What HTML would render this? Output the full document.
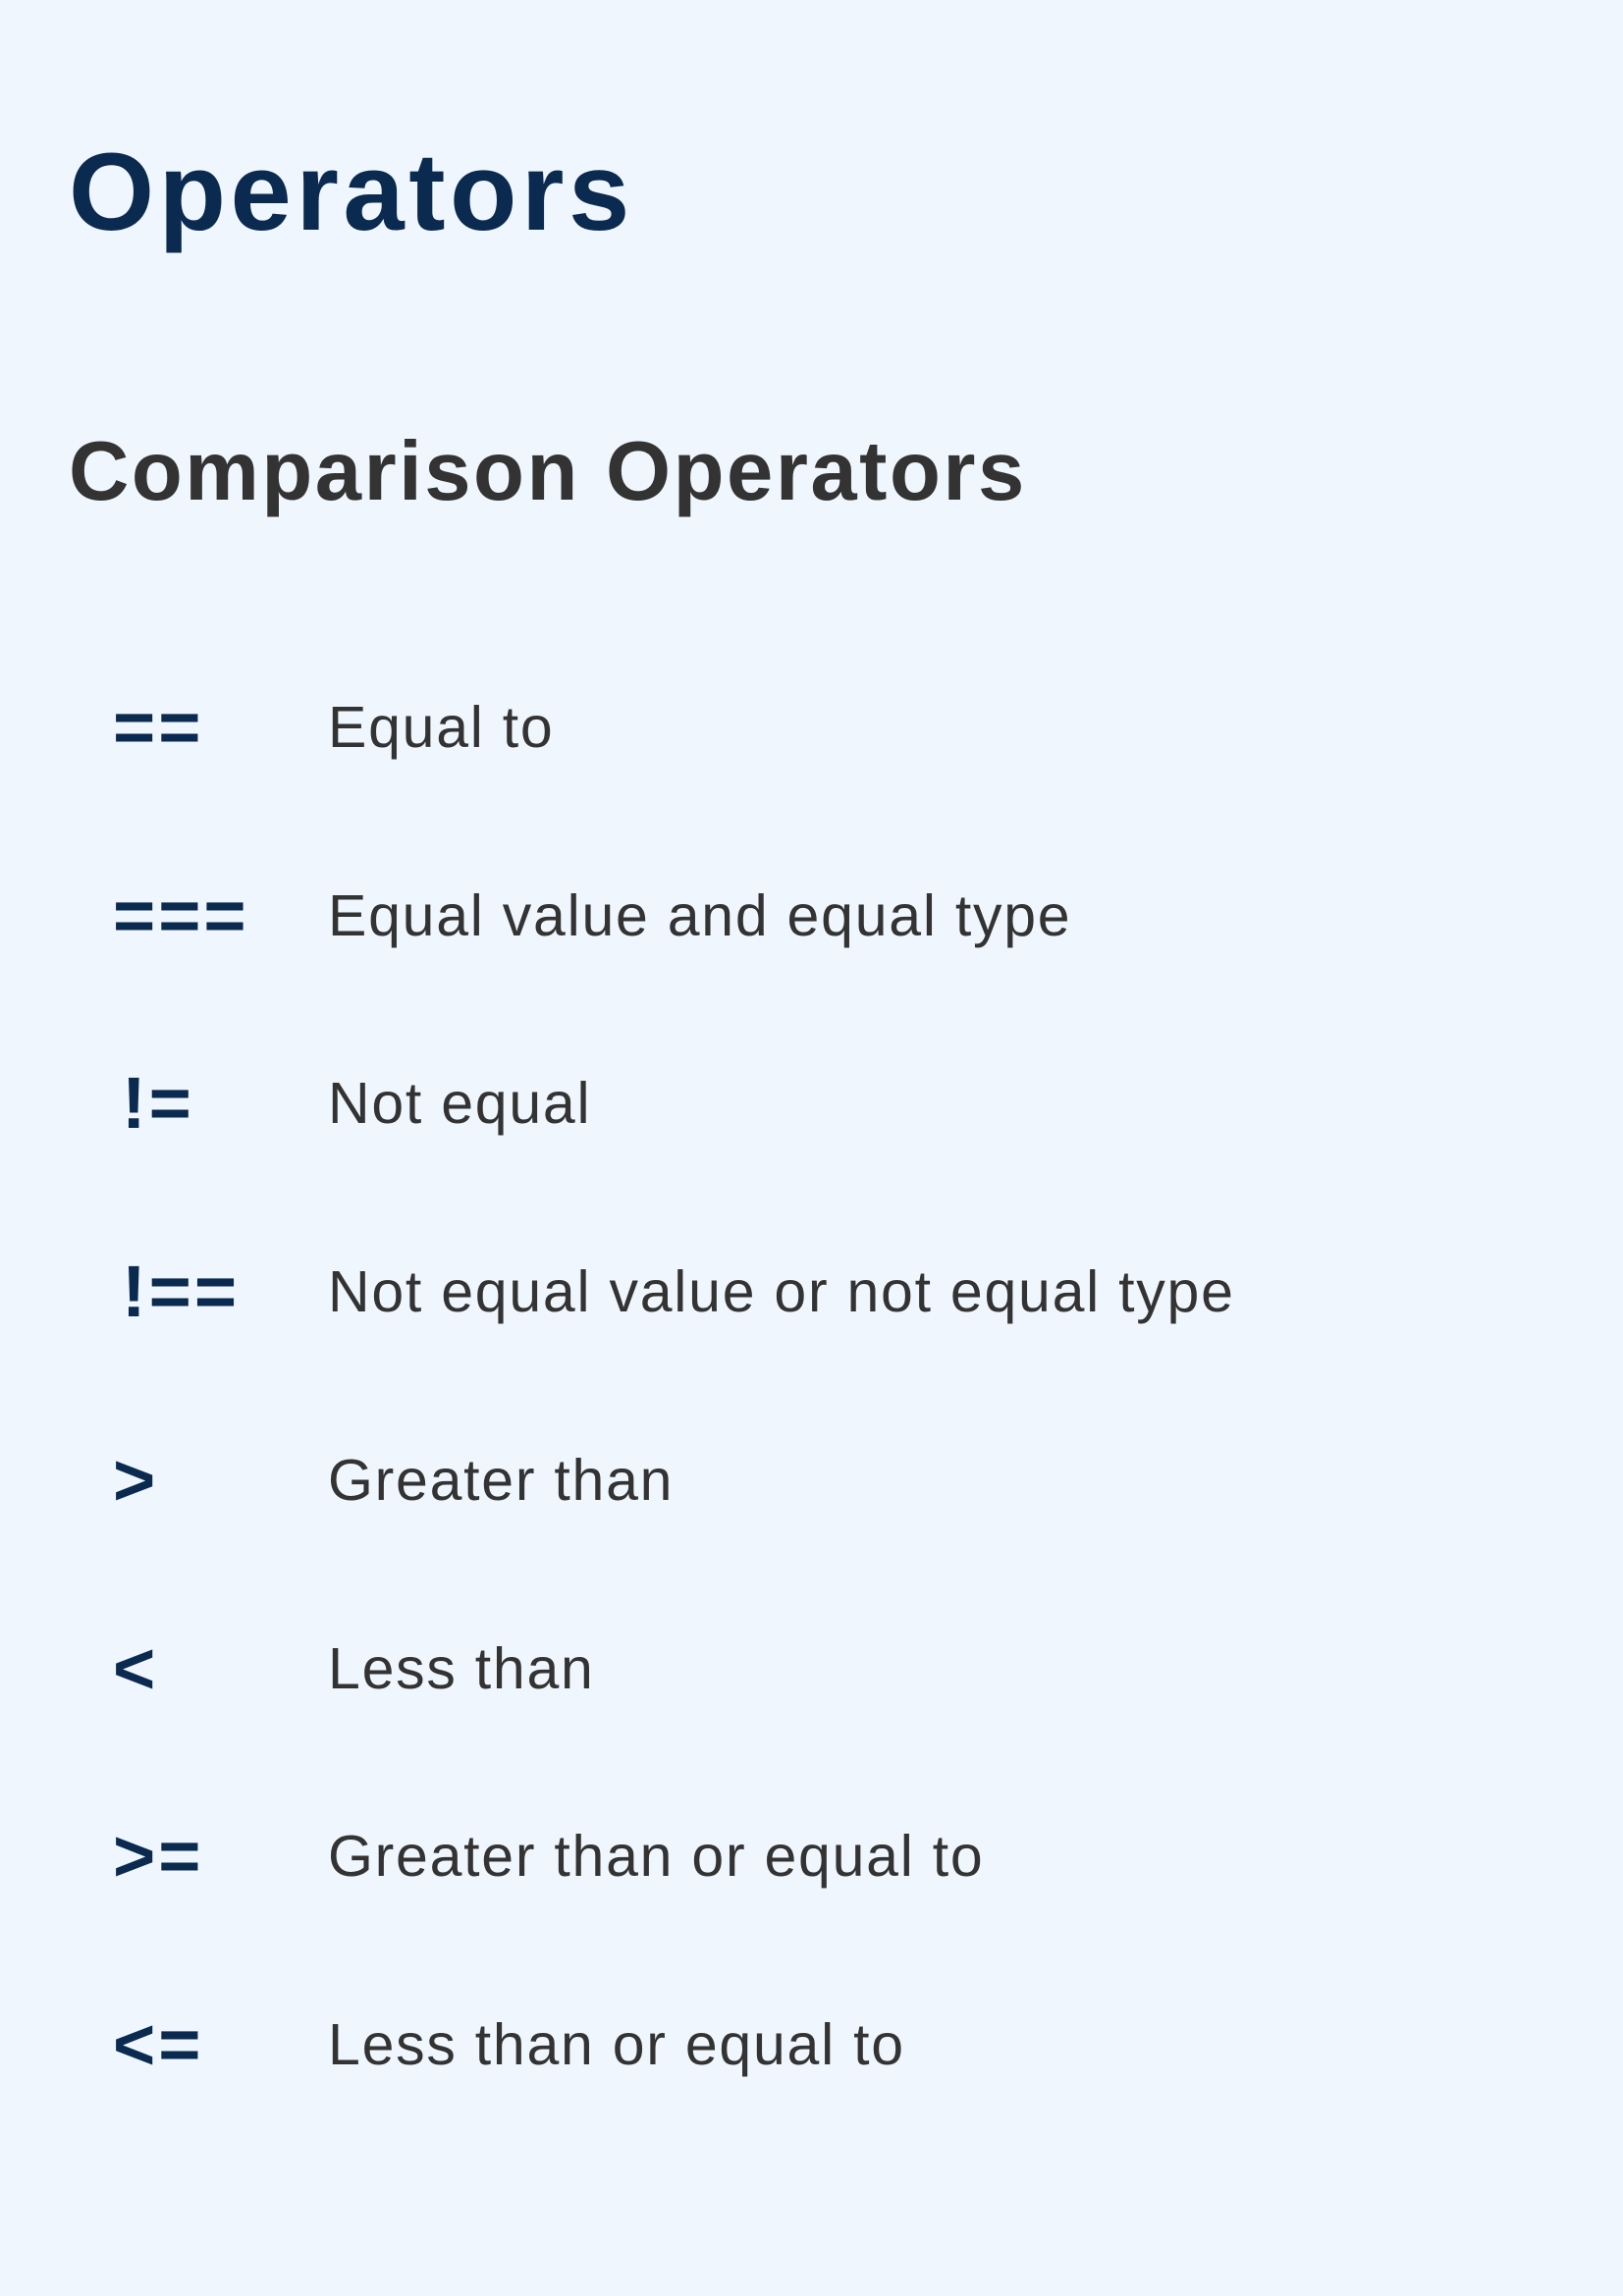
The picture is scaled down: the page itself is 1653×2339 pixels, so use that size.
<!DOCTYPE html>
<html><head><meta charset="utf-8"><style>
html,body{margin:0;padding:0}
body{width:1653px;height:2339px;background:#eff6fd;position:relative;overflow:hidden;font-family:"Liberation Sans",sans-serif}
.t{position:absolute;left:70px;top:140px;font-size:112px;font-weight:bold;color:#0b2a4f;letter-spacing:4.5px;line-height:1;white-space:nowrap}
.s{position:absolute;left:70px;top:438px;font-size:85px;font-weight:bold;color:#333;letter-spacing:2.5px;line-height:1;white-space:nowrap}
.row{position:absolute;left:0;height:80px;width:1653px}
.op{position:absolute;left:115px;bottom:-7px;font-size:74px;font-weight:bold;color:#0b2a4f;letter-spacing:3px;line-height:1;white-space:nowrap}
.op.b{left:124px}
.d{position:absolute;left:334px;bottom:0;font-size:59px;color:#333;letter-spacing:1.75px;line-height:1;white-space:nowrap}
</style></head><body>
<div class="t">Operators</div>
<div class="s">Comparison Operators</div>
<div class="row" style="top:691px"><span class="op">==</span><span class="d">Equal to</span></div>
<div class="row" style="top:883px"><span class="op">===</span><span class="d">Equal value and equal type</span></div>
<div class="row" style="top:1074px"><span class="op b">!=</span><span class="d">Not equal</span></div>
<div class="row" style="top:1266px"><span class="op b">!==</span><span class="d">Not equal value or not equal type</span></div>
<div class="row" style="top:1458px"><span class="op">&gt;</span><span class="d">Greater than</span></div>
<div class="row" style="top:1650px"><span class="op">&lt;</span><span class="d">Less than</span></div>
<div class="row" style="top:1841px"><span class="op">&gt;=</span><span class="d">Greater than or equal to</span></div>
<div class="row" style="top:2033px"><span class="op">&lt;=</span><span class="d">Less than or equal to</span></div>
</body></html>
